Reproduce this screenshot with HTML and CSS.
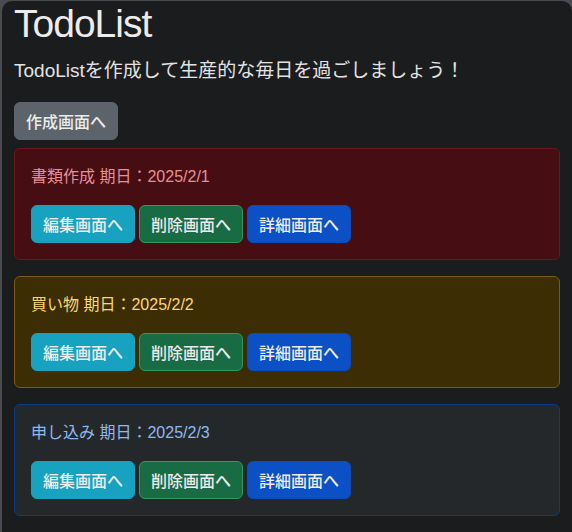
FILE: index.html
```html
<!DOCTYPE html>
<html lang="ja">
<head>
<meta charset="utf-8">
<title>TodoList</title>
<link rel="stylesheet" href="styles.css">
</head>
<body>
<div class="window">
  <main class="container">
    <h1 class="title">TodoList</h1>
    <p class="lead">TodoListを作成して生産的な毎日を過ごしましょう！</p>
    <div class="toolbar">
      <a class="btn btn-secondary" href="#">作成画面へ</a>
    </div>

    <div class="alert alert-danger">
      <p class="alert-text">書類作成 期日：2025/2/1</p>
      <div class="actions">
        <a class="btn btn-info" href="#">編集画面へ</a>
        <a class="btn btn-success" href="#">削除画面へ</a>
        <a class="btn btn-primary" href="#">詳細画面へ</a>
      </div>
    </div>

    <div class="alert alert-warning">
      <p class="alert-text">買い物 期日：2025/2/2</p>
      <div class="actions">
        <a class="btn btn-info" href="#">編集画面へ</a>
        <a class="btn btn-success" href="#">削除画面へ</a>
        <a class="btn btn-primary" href="#">詳細画面へ</a>
      </div>
    </div>

    <div class="alert alert-info">
      <p class="alert-text">申し込み 期日：2025/2/3</p>
      <div class="actions">
        <a class="btn btn-info" href="#">編集画面へ</a>
        <a class="btn btn-success" href="#">削除画面へ</a>
        <a class="btn btn-primary" href="#">詳細画面へ</a>
      </div>
    </div>
  </main>
</div>
</body>
</html>
```

FILE: styles.css
```css
html, body {
  height: 100%;
}

body {
  margin: 0;
  background: #4a4b50;
  overflow: hidden;
  font-family: "Liberation Sans", "Noto Sans CJK JP", sans-serif;
  font-size: 16px;
  line-height: 1.5;
  color: #dee2e6;
}

.window {
  margin: 1px 0 0 2px;
  height: calc(100% - 1px);
  background: #1b1c1e;
  border-radius: 10px 10px 0 0;
  box-sizing: border-box;
  padding: 0 12px;
}

.container {
  display: flex;
  flex-direction: column;
}

.title {
  margin: 0 0 8px;
  font-size: 39px;
  font-weight: 400;
  line-height: 1.2;
  letter-spacing: -1px;
  color: #ececec;
}

.lead {
  margin: 0 0 16px;
  font-size: 19px;
  line-height: 30px;
  height: 30px;
  color: #e3e3e3;
}

.toolbar {
  display: flex;
  margin-bottom: 8px;
}

.btn {
  display: inline-block;
  font-family: "Noto Sans CJK JP", "Liberation Sans", sans-serif;
  font-size: 16px;
  line-height: 24px;
  padding: 6px 11px;
  border: 1px solid transparent;
  border-radius: 6px;
  color: #ececec;
  text-decoration: none;
  font-weight: 500;
  white-space: nowrap;
}

.btn-secondary {
  background: #5c636a;
  border-color: #5c636a;
}

.btn-info {
  background: #17a2bf;
  border-color: #17a2bf;
}

.btn-success {
  background: #186b43;
  border-color: #2c9c5d;
}

.btn-primary {
  background: #0b51c5;
  border-color: #0b4bbb;
}

.alert {
  padding: 16px;
  border: 1px solid transparent;
  border-radius: 6px;
  margin-bottom: 16px;
}

.alert-text {
  margin: 0 0 16px;
  height: 24px;
  line-height: 24px;
}

.actions {
  display: flex;
  gap: 4px;
}

.alert-danger {
  background: #460d13;
  border-color: #6c1720;
  color: #e8909a;
}

.alert-warning {
  background: #3d2d04;
  border-color: #7c5b0c;
  color: #fcd873;
}

.alert-info {
  background: #25282b;
  border-color: #0b3b88;
  color: #8ebaf2;
}
```
